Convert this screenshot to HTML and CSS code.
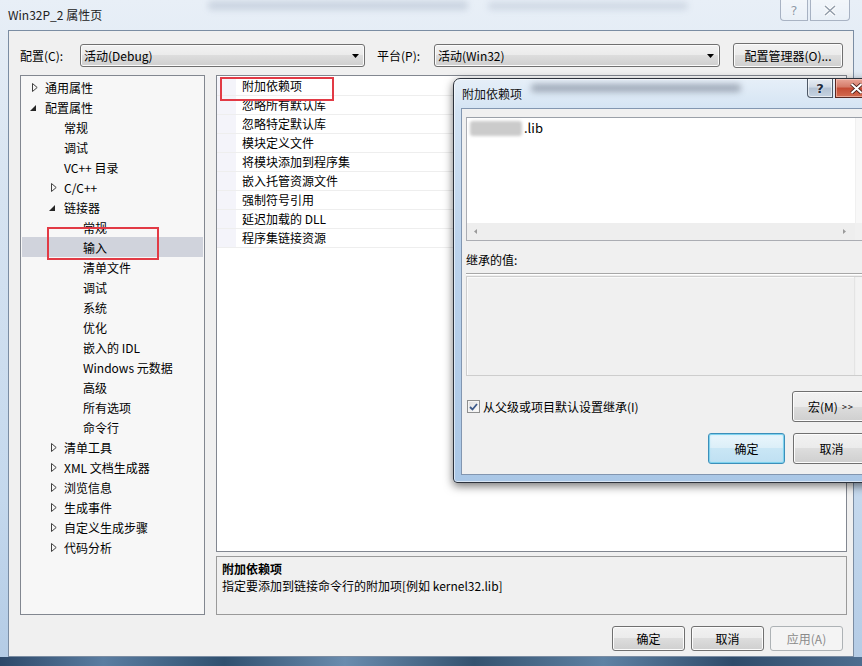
FILE: index.html
```html
<!DOCTYPE html>
<html lang="zh-CN">
<head>
<meta charset="utf-8">
<title>Win32P_2 属性页</title>
<link rel="stylesheet" href="styles.css">
</head>
<body>
<div class="win">
  <div class="titlebar">
    <div class="smudge s1"></div>
    <div class="smudge s2"></div>
    <span class="title">Win32P_2 属性页</span>
    <div class="caps">
      <span class="cap help">?</span>
      <span class="cap close"><svg width="12" height="11" viewBox="0 0 12 11"><path d="M1 1 L11 10 M11 1 L1 10" stroke="#fff" stroke-width="3.2"/><path d="M1 1 L11 10 M11 1 L1 10" stroke="#8f9aa8" stroke-width="1.4"/></svg></span>
    </div>
  </div>
  <div class="client">
    <div class="toolbar">
      <span class="lbl l1">配置(C):</span>
      <div class="combo c1"><span>活动(Debug)</span><svg width="7" height="4" viewBox="0 0 7 4"><path d="M0 0 H7 L3.5 4 Z" fill="#000"/></svg></div>
      <span class="lbl l2">平台(P):</span>
      <div class="combo c2"><span>活动(Win32)</span><svg width="7" height="4" viewBox="0 0 7 4"><path d="M0 0 H7 L3.5 4 Z" fill="#000"/></svg></div>
      <button class="btn mgr">配置管理器(O)...</button>
    </div>
    <div class="panels">
      <div class="tree">
        <div class="row lv0"><span class="arr"><svg width="6" height="9" viewBox="0 0 6 9"><path d="M0.5 0.5 L5.2 4.5 L0.5 8.5 Z" fill="none" stroke="#404040"/></svg></span>通用属性</div>
        <div class="row lv0"><span class="arr"><svg class="ex" width="6" height="6" viewBox="0 0 6 6"><path d="M6 0 V6 H0 Z" fill="#262626"/></svg></span>配置属性</div>
        <div class="row lv1"><span class="arr"></span>常规</div>
        <div class="row lv1"><span class="arr"></span>调试</div>
        <div class="row lv1"><span class="arr"></span>VC++ 目录</div>
        <div class="row lv1"><span class="arr"><svg width="6" height="9" viewBox="0 0 6 9"><path d="M0.5 0.5 L5.2 4.5 L0.5 8.5 Z" fill="none" stroke="#404040"/></svg></span>C/C++</div>
        <div class="row lv1"><span class="arr"><svg class="ex" width="6" height="6" viewBox="0 0 6 6"><path d="M6 0 V6 H0 Z" fill="#262626"/></svg></span>链接器</div>
        <div class="row lv2"><span class="arr"></span>常规</div>
        <div class="row lv2 sel"><span class="arr"></span>输入</div>
        <div class="row lv2"><span class="arr"></span>清单文件</div>
        <div class="row lv2"><span class="arr"></span>调试</div>
        <div class="row lv2"><span class="arr"></span>系统</div>
        <div class="row lv2"><span class="arr"></span>优化</div>
        <div class="row lv2"><span class="arr"></span>嵌入的 IDL</div>
        <div class="row lv2"><span class="arr"></span>Windows 元数据</div>
        <div class="row lv2"><span class="arr"></span>高级</div>
        <div class="row lv2"><span class="arr"></span>所有选项</div>
        <div class="row lv2"><span class="arr"></span>命令行</div>
        <div class="row lv1"><span class="arr"><svg width="6" height="9" viewBox="0 0 6 9"><path d="M0.5 0.5 L5.2 4.5 L0.5 8.5 Z" fill="none" stroke="#404040"/></svg></span>清单工具</div>
        <div class="row lv1"><span class="arr"><svg width="6" height="9" viewBox="0 0 6 9"><path d="M0.5 0.5 L5.2 4.5 L0.5 8.5 Z" fill="none" stroke="#404040"/></svg></span>XML 文档生成器</div>
        <div class="row lv1"><span class="arr"><svg width="6" height="9" viewBox="0 0 6 9"><path d="M0.5 0.5 L5.2 4.5 L0.5 8.5 Z" fill="none" stroke="#404040"/></svg></span>浏览信息</div>
        <div class="row lv1"><span class="arr"><svg width="6" height="9" viewBox="0 0 6 9"><path d="M0.5 0.5 L5.2 4.5 L0.5 8.5 Z" fill="none" stroke="#404040"/></svg></span>生成事件</div>
        <div class="row lv1"><span class="arr"><svg width="6" height="9" viewBox="0 0 6 9"><path d="M0.5 0.5 L5.2 4.5 L0.5 8.5 Z" fill="none" stroke="#404040"/></svg></span>自定义生成步骤</div>
        <div class="row lv1"><span class="arr"><svg width="6" height="9" viewBox="0 0 6 9"><path d="M0.5 0.5 L5.2 4.5 L0.5 8.5 Z" fill="none" stroke="#404040"/></svg></span>代码分析</div>
        <div class="mark mark-tree"></div>
      </div>
      <div class="right">
        <div class="grid">
          <div class="grow"><span class="gut"></span><span class="gl">附加依赖项</span></div>
          <div class="grow"><span class="gut"></span><span class="gl">忽略所有默认库</span></div>
          <div class="grow"><span class="gut"></span><span class="gl">忽略特定默认库</span></div>
          <div class="grow"><span class="gut"></span><span class="gl">模块定义文件</span></div>
          <div class="grow"><span class="gut"></span><span class="gl">将模块添加到程序集</span></div>
          <div class="grow"><span class="gut"></span><span class="gl">嵌入托管资源文件</span></div>
          <div class="grow"><span class="gut"></span><span class="gl">强制符号引用</span></div>
          <div class="grow"><span class="gut"></span><span class="gl">延迟加载的 DLL</span></div>
          <div class="grow"><span class="gut"></span><span class="gl">程序集链接资源</span></div>
          <div class="mark mark-grid"></div>
        </div>
        <div class="desc">
          <div class="dh">附加依赖项</div>
          <div class="dt">指定要添加到链接命令行的附加项[例如 kernel32.lib]</div>
        </div>
      </div>
    </div>
    <div class="footer">
      <button class="btn fb">确定</button>
      <button class="btn fb">取消</button>
      <button class="btn fb dis">应用(A)</button>
    </div>
  </div>
</div>

<div class="dlg">
  <div class="dtitle">
    <div class="smudge s3"></div>
    <span class="dname">附加依赖项</span>
    <div class="dcaps">
      <span class="dcap dhelp">?</span>
      <span class="dcap dclose"><svg width="13" height="11" viewBox="0 0 13 11"><path d="M1.5 1 L11.5 10 M11.5 1 L1.5 10" stroke="#3a1410" stroke-width="3.6"/><path d="M1.5 1 L11.5 10 M11.5 1 L1.5 10" stroke="#fff" stroke-width="2"/></svg></span>
    </div>
  </div>
  <div class="dclient">
    <div class="ta">
      <div class="tacontent"><span class="blob"></span>.lib</div>
      <div class="vs">
        <svg width="5" height="3" viewBox="0 0 5 3"><path d="M0 3 L2.5 0 L5 3 Z" fill="#9a9a9a"/></svg>
        <svg width="5" height="3" viewBox="0 0 5 3"><path d="M0 0 L2.5 3 L5 0 Z" fill="#9a9a9a"/></svg>
      </div>
      <div class="hs">
        <svg width="3" height="5" viewBox="0 0 3 5"><path d="M3 0 L0 2.5 L3 5 Z" fill="#9a9a9a"/></svg>
        <svg width="3" height="5" viewBox="0 0 3 5"><path d="M0 0 L3 2.5 L0 5 Z" fill="#9a9a9a"/></svg>
      </div>
      <div class="corner"></div>
    </div>
    <div class="inhl">继承的值:</div>
    <div class="sep"></div>
    <div class="inh">
      <div class="inhc"></div>
      <div class="vs">
        <svg width="5" height="3" viewBox="0 0 5 3"><path d="M0 3 L2.5 0 L5 3 Z" fill="#a8a8a8"/></svg>
        <svg width="5" height="3" viewBox="0 0 5 3"><path d="M0 0 L2.5 3 L5 0 Z" fill="#a8a8a8"/></svg>
      </div>
    </div>
    <div class="chkrow">
      <span class="chk"><svg width="9" height="8" viewBox="0 0 9 8"><path d="M1 4 L3.5 6.5 L8 1" fill="none" stroke="#3d5a8a" stroke-width="1.8"/></svg></span>
      <span class="chkl">从父级或项目默认设置继承(I)</span>
      <button class="btn dbtn macro">宏(M) <span class="gg">&gt;&gt;</span></button>
    </div>
    <div class="btnrow">
      <button class="btn dbtn ok">确定</button>
      <button class="btn dbtn">取消</button>
    </div>
  </div>
</div>
</body>
</html>
```

FILE: styles.css
```css
* { box-sizing: border-box; margin: 0; padding: 0; }
html, body { width: 862px; height: 666px; overflow: hidden; }
body {
  font-family: "Noto Sans CJK SC", "Noto Sans", sans-serif;
  font-size: 12px;
  color: #000;
  background: #2e4a6a;
  position: relative;
}

/* main window */
.win {
  width: 862px;
  height: 666px;
  display: flex;
  flex-direction: column;
  padding: 0 8px 9px 8px;
  background:
    linear-gradient(90deg, #2d4869, #5a7da1 12%, #30506f 26%, #6a8cae 40%, #34526f 55%, #5f82a4 70%, #2f4b6a 85%, #4d6d8f) bottom / 100% 9px no-repeat,
    linear-gradient(#e8eff7, #d6e3f1 30%, #c4d8ed 75%, #b3cbe5);
}
.titlebar {
  height: 30px;
  flex: none;
  display: flex;
  align-items: flex-start;
  justify-content: space-between;
  position: relative;
}
.smudge { position: absolute; filter: blur(3px); border-radius: 4px; }
.s1 { left: 200px; top: 1px; width: 260px; height: 9px; background: rgba(70, 95, 130, 0.18); }
.s2 { left: 480px; top: 2px; width: 200px; height: 8px; background: rgba(70, 95, 130, 0.14); }
.title { line-height: 30px; color: #222; position: relative; }
.caps { display: flex; gap: 2px; margin-right: 4px; position: relative; }
.cap {
  height: 21px;
  display: flex;
  align-items: center;
  justify-content: center;
  border: 1px solid rgba(110, 125, 150, 0.55);
  border-top: none;
  background: linear-gradient(rgba(255,255,255,0.45), rgba(255,255,255,0.15));
  color: #8f9aa8;
  font-family: "DejaVu Sans", sans-serif;
  font-size: 13px;
  text-shadow: 0 0 2px #fff, 0 0 1px #fff;
}
.help { width: 28px; border-radius: 0 0 0 4px; }
.close { width: 40px; border-radius: 0 0 4px 0; }

.client {
  flex: 1;
  background: #f0f0f0;
  border: 1px solid #7b8da3;
  padding: 12px 6px 5px 11px;
  display: flex;
  flex-direction: column;
}
.toolbar { height: 25px; display: flex; align-items: center; flex: none; }
.lbl { white-space: nowrap; }
.l1 { width: 60px; }
.l2 { width: 57px; }
.combo {
  height: 23px;
  border: 1px solid #707070;
  border-radius: 3px;
  background: linear-gradient(#f2f2f2, #ebebeb 50%, #dddddd 50%, #cfcfcf);
  box-shadow: inset 0 0 0 1px #fbfbfb;
  display: flex;
  align-items: center;
  justify-content: space-between;
  padding: 0 5px 0 3px;
}
.c1 { width: 285px; margin-right: 12px; }
.c2 { width: 286px; }
.btn {
  font-family: inherit;
  font-size: 12px;
  color: #000;
  border: 1px solid #707070;
  border-radius: 3px;
  background: linear-gradient(#f2f2f2, #ebebeb 50%, #dddddd 50%, #cfcfcf);
  box-shadow: inset 0 0 0 1px #fcfcfc;
  display: flex;
  align-items: center;
  justify-content: center;
}
.mgr { width: 110px; height: 25px; margin-left: 13px; }

.panels { height: 540px; margin-top: 7px; display: flex; gap: 11px; flex: none; }
.tree {
  width: 185px;
  border: 1px solid #828790;
  background: #f7f7f7;
  padding-top: 1px;
  position: relative;
}
.row {
  height: 20px;
  display: flex;
  align-items: center;
  white-space: nowrap;
  margin: 0 1px;
}
.arr { width: 13px; flex: none; display: flex; align-items: center; }
.arr .ex { margin-left: -2px; margin-top: 2px; }
.lv0 { padding-left: 10px; }
.lv1 { padding-left: 29px; }
.lv2 { padding-left: 48px; }
.sel { background: #d0d3dc; }
.mark { position: absolute; border: 2px solid #e23a45; }
.mark-tree { left: 26px; top: 151px; width: 112px; height: 33px; }

.right { flex: 1; display: flex; flex-direction: column; gap: 4px; }
.grid {
  flex: 1;
  border: 1px solid #828790;
  background: #fff;
  padding-top: 1px;
  position: relative;
}
.grow { height: 19px; display: flex; border-bottom: 1px solid #eeeeee; }
.gut { width: 19px; background: #f4f4fa; flex: none; }
.gl { padding-left: 6px; line-height: 18px; white-space: nowrap; }
.mark-grid { left: 3px; top: 1px; width: 114px; height: 24px; }
.desc {
  height: 59px;
  flex: none;
  border: 1px solid #9a9a9a;
  background: #f0f0f0;
  padding: 3px 5px;
}
.dh { font-weight: bold; line-height: 17px; }
.dt { line-height: 17px; }

.footer {
  height: 25px;
  margin-top: 11px;
  flex: none;
  display: flex;
  justify-content: flex-end;
  gap: 6px;
  padding-right: 4px;
}
.fb { width: 73px; height: 25px; }
.dis {
  color: #8a8a8a;
  border-color: #adb2b5;
  background: #f4f4f4;
  box-shadow: none;
}

/* dialog window */
.dlg {
  position: absolute;
  left: 453px;
  top: 78px;
  width: 433px;
  height: 405px;
  border: 1px solid #2c323c;
  border-radius: 7px 7px 4px 4px;
  background: linear-gradient(#e6eff8, #d3e3f3 8%, #bcd3ec 40%, #aac7e6 100%);
  box-shadow: inset 0 0 0 1px rgba(255,255,255,0.55), 0 3px 10px rgba(0,0,0,0.55);
  padding: 0 7px 7px 7px;
  display: flex;
  flex-direction: column;
}
.dtitle {
  height: 29px;
  flex: none;
  display: flex;
  align-items: flex-start;
  justify-content: space-between;
  position: relative;
}
.s3 { left: 70px; top: 5px; width: 210px; height: 8px; background: rgba(40, 50, 70, 0.35); filter: blur(3px); }
.dname { line-height: 29px; padding-left: 1px; position: relative; color: #111; }
.dcaps { display: flex; gap: 2px; position: relative; }
.dcap {
  height: 19px;
  display: flex;
  align-items: center;
  justify-content: center;
  border: 1px solid #4d5866;
  border-top: none;
}
.dhelp {
  width: 26px;
  border-radius: 0 0 0 4px;
  background: linear-gradient(#e7edf3, #cfd9e4 45%, #b3c2d3 50%, #c6d3e1);
  color: #1d2b3d;
  font-family: "DejaVu Sans", sans-serif;
  font-size: 13px;
  font-weight: bold;
  text-shadow: 0 0 2px #fff;
  box-shadow: inset 0 0 0 1px rgba(255,255,255,0.6);
}
.dclose {
  width: 43px;
  border-radius: 0 0 4px 0;
  border-color: #5a2620;
  background: linear-gradient(#e8a597, #d47a68 45%, #c44a33 50%, #d26b4f);
  box-shadow: inset 0 0 0 1px rgba(255,220,210,0.5);
}
.dclient {
  flex: 1;
  background: #f0f0f0;
  border: 1px solid #8296b0;
  padding: 8px 4px 0 4px;
  display: flex;
  flex-direction: column;
}
.ta {
  height: 124px;
  flex: none;
  border: 1px solid #abadb3;
  border-top-color: #9aa0a8;
  background: #fff;
  display: grid;
  grid-template-columns: 1fr 17px;
  grid-template-rows: 1fr 17px;
}
.tacontent { padding: 1px 3px; font-size: 13px; line-height: 18px; display: flex; align-items: center; align-self: start; height: 20px; }
.blob {
  display: inline-block;
  width: 52px;
  height: 15px;
  background: #cbcbcb;
  filter: blur(1.5px);
  border-radius: 3px;
  margin-right: 2px;
}
.vs {
  background: #f8f8f8;
  border-left: 1px solid #f0f0f0;
  display: flex;
  flex-direction: column;
  justify-content: space-between;
  align-items: center;
  padding: 7px 0;
}
.hs {
  background: #eeeeee;
  display: flex;
  align-items: center;
  justify-content: space-between;
  padding: 0 9px 0 7px;
}
.corner { background: #f0f0f0; }
.inhl { margin-top: 10px; line-height: 18px; height: 18px; flex: none; }
.sep {
  margin-top: 4px;
  height: 2px;
  flex: none;
  border-top: 1px solid #a7a7a7;
  border-bottom: 1px solid #ffffff;
}
.inh {
  margin-top: 1px;
  height: 100px;
  flex: none;
  border: 1px solid #cdcdcd;
  background: #f0f0f0;
  display: grid;
  grid-template-columns: 1fr 17px;
}
.inhc { border-right: 1px solid #e4e4e4; box-shadow: inset 1px 1px 0 #fafafa; }
.inh .vs { background: #f3f3f3; padding: 7px 0; }
.chkrow { margin-top: 15px; height: 31px; flex: none; display: flex; align-items: center; padding-left: 1px; padding-right: 3px; }
.chk {
  width: 13px;
  height: 13px;
  border: 1px solid #8e8f8f;
  background: linear-gradient(135deg, #dcdcdc, #ffffff);
  display: flex;
  align-items: center;
  justify-content: center;
  box-shadow: inset 0 0 0 1px #f4f4f4;
}
.chkl { margin-left: 3px; flex: 1; }
.dbtn { width: 77px; height: 31px; }
.macro { width: 78px; }
.gg { font-size: 9px; margin-left: 4px; letter-spacing: 1px; }
.btnrow { margin-top: 11px; height: 31px; flex: none; display: flex; justify-content: flex-end; gap: 8px; padding-right: 3px; }
.ok {
  border-color: #3c8fba;
  background: linear-gradient(#eaf6fc, #dbeef8 50%, #c9e6f5 50%, #bfe0f2);
  box-shadow: inset 0 0 0 1px #7fd2ee, inset 0 0 3px #9fe0f5;
}
```
